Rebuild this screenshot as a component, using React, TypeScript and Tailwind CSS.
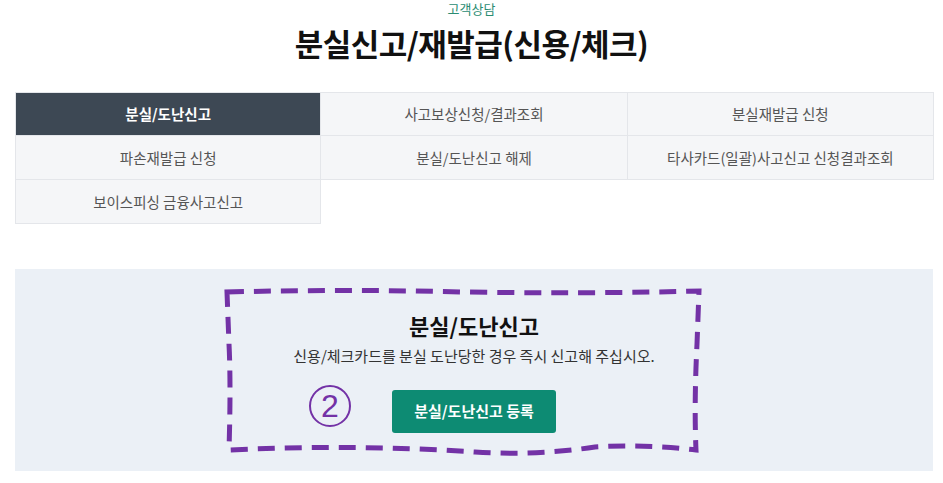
import React from "react"

const tabs = [
  "분실/도난신고",
  "사고보상신청/결과조회",
  "분실재발급 신청",
  "파손재발급 신청",
  "분실/도난신고 해제",
  "타사카드(일괄)사고신고 신청결과조회",
  "보이스피싱 금융사고신고",
]

const font = { fontFamily: '"Noto Sans CJK KR", "Noto Sans", sans-serif' }

export default function App() {
  return (
    <div className="min-h-[483px] w-[943px] bg-white" style={font}>
      <div className="flex flex-col items-center">
        <p className="pt-px text-[13px] leading-[16px] text-[#2b8c72]">고객상담</p>
        <h1 className="mt-[9px] text-[31px] font-bold leading-[34px] tracking-[-0.5px] text-[#111]">
          분실신고/재발급(신용/체크)
        </h1>
      </div>

      <ul className="ml-[15px] mt-[32px] grid w-[919px] grid-cols-3">
        {tabs.map((label, i) => {
          const active = i === 0
          const row = Math.floor(i / 3)
          const col = i % 3
          return (
            <li
              key={label}
              className={[
                "flex h-[44px] items-center justify-center border-[#e4e6ea] text-[14.5px]",
                "border-r border-b",
                row === 0 ? "border-t" : "",
                col === 0 ? "border-l" : "",
                active
                  ? "border-[#3d4854] bg-[#3d4854] font-bold text-white"
                  : "bg-[#f5f6f8] text-[#555]",
              ].join(" ")}
            >
              {label}
            </li>
          )
        })}
      </ul>

      <div className="relative ml-[15px] mt-[45px] flex h-[202px] w-[918px] flex-col items-center bg-[#ebf0f6] pt-[41px]">
        <h2 className="text-[22px] font-bold leading-[30px] text-[#111]">분실/도난신고</h2>
        <p className="mt-[6px] text-[15px] leading-5 text-[#333]">
          신용/체크카드를 분실 도난당한 경우 즉시 신고해 주십시오.
        </p>
        <button
          type="button"
          className="mt-[24px] flex h-[43px] w-[164px] items-center justify-center rounded-[3px] bg-[#0d8b73] text-[15px] font-bold text-white"
        >
          분실/도난신고 등록
        </button>

        {/* annotation overlay */}
        <div
          className="absolute left-[294px] top-[116px] flex h-[42px] w-[42px] items-center justify-center rounded-full border-2 border-[#7332a6] text-[32px] font-medium leading-none text-[#7332a6]"
          style={{ fontFamily: '"Liberation Sans", Arial, sans-serif' }}
        >
          2
        </div>
        <svg
          className="pointer-events-none absolute left-[190px] top-[15px]"
          width="500"
          height="180"
          viewBox="0 0 500 180"
          fill="none"
        >
          <path
            d="M22 8 Q 140 5 260 8 Q 380 10 494 7 L 492 60 Q 489 120 491 166 Q 440 160 390 163 Q 330 172 270 168 Q 150 160 24 166 Q 26 100 24 60 Z"
            stroke="#7332a6"
            strokeWidth="5"
            strokeDasharray="17 10"
          />
        </svg>
      </div>
    </div>
  )
}
